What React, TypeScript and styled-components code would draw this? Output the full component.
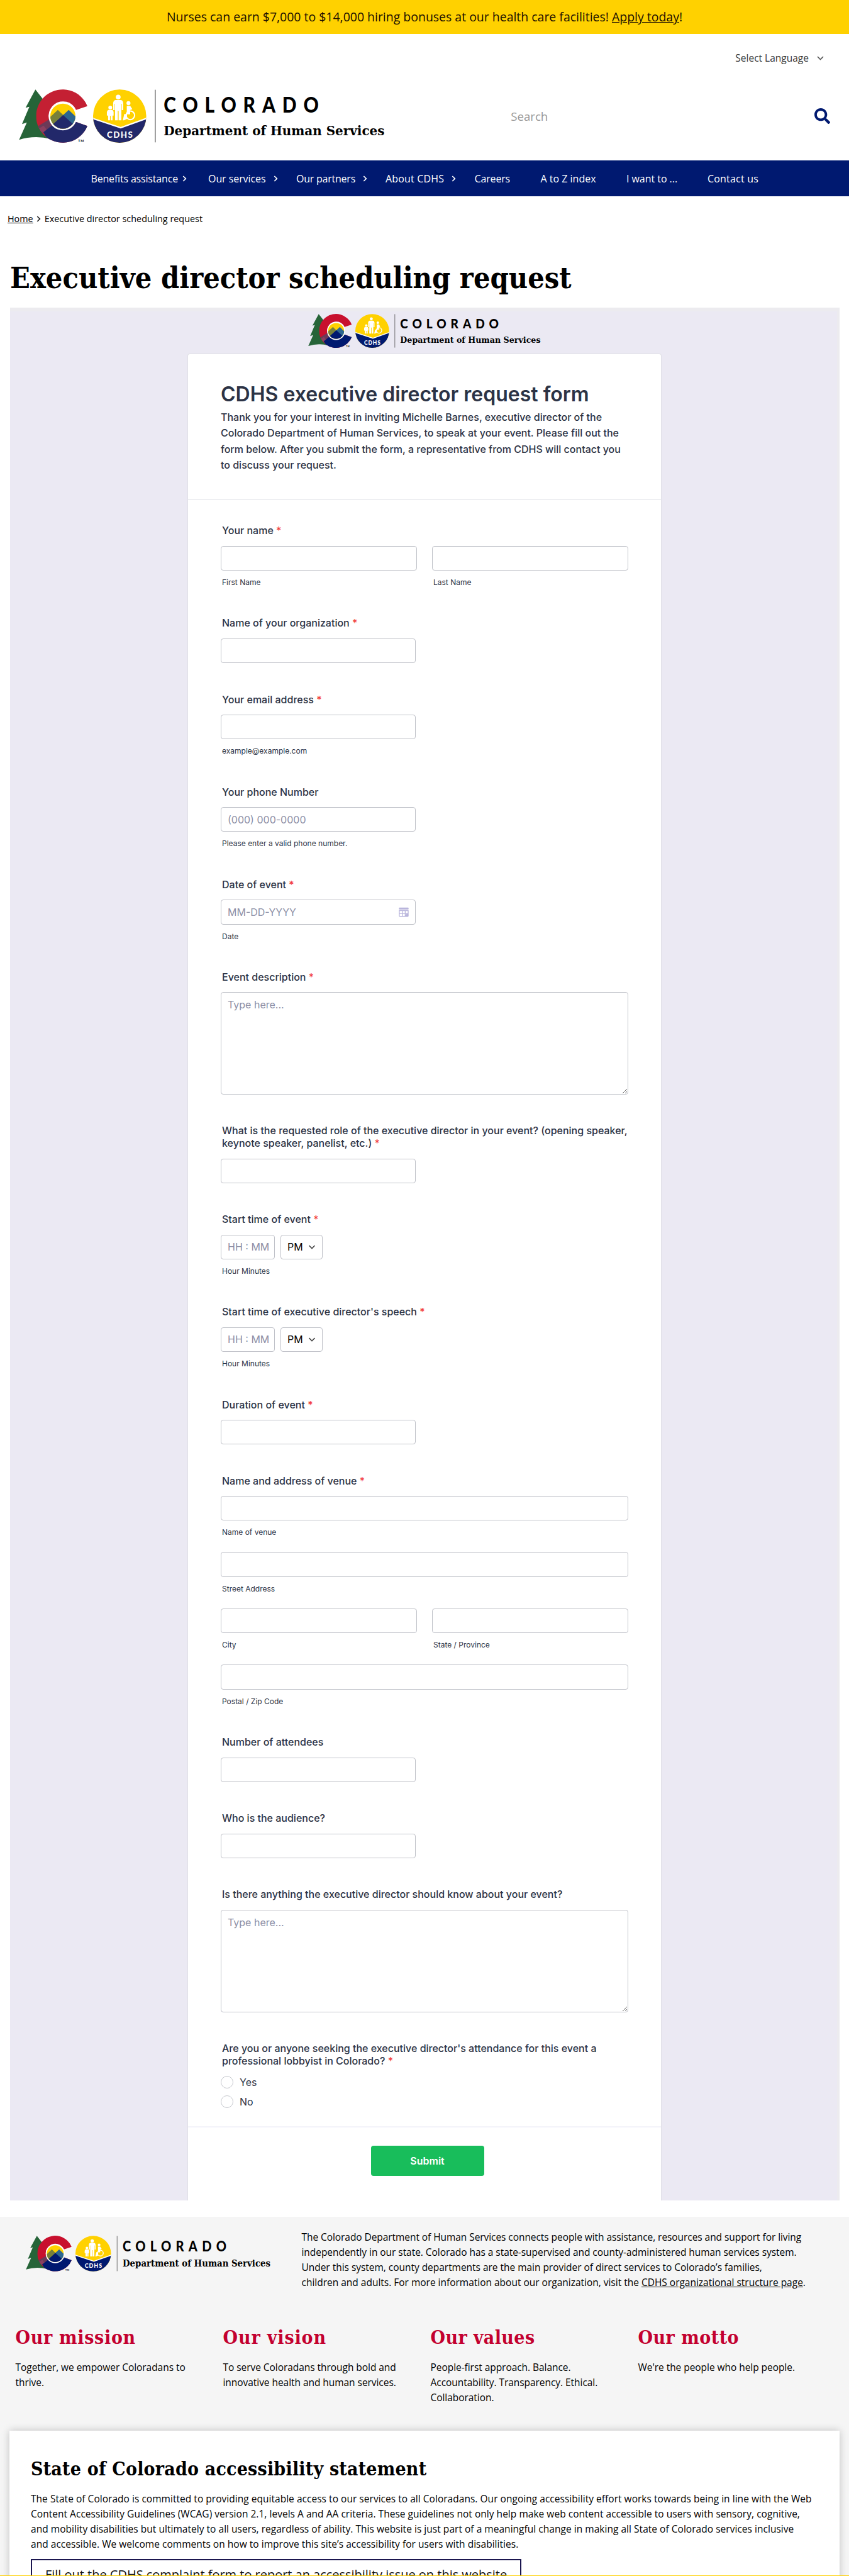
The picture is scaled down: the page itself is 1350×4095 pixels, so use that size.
import React, { ReactNode } from "react";
import styled, { createGlobalStyle } from "styled-components";
import { FaSearch } from "react-icons/fa";

const SANS = `"Trebuchet MS", "Open Sans", "Noto Sans", sans-serif`;
const SLAB = `"Museo Slab", "DejaVu Serif Condensed", "DejaVu Serif", serif`;
const FORM = `Inter, "Liberation Sans", sans-serif`;

const GlobalStyle = createGlobalStyle`
  *, *::before, *::after { box-sizing: border-box; }
  body { margin: 0; background: #fff; color: #000; font-family: ${SANS}; }
  h1, h2, p { margin: 0; }
  a { color: inherit; }
`;

const Page = styled.div`
  display: flex;
  flex-direction: column;
  width: 1350px;
  height: 4095px;
  overflow: hidden;
`;

const Content = styled.div`
  flex: 1;
  min-height: 0;
  overflow: hidden;
`;

const BottomBar = styled.div`
  flex: none;
  height: 1px;
  background: #ffd100;
`;

/* One typeset line; $ls tunes its tracking. */
const Line = styled.span<{ $ls?: number }>`
  display: block;
  white-space: nowrap;
  letter-spacing: ${(p) => p.$ls ?? 0}px;
`;

/* ---------- Header ---------- */

const Banner = styled.div`
  height: 54px;
  line-height: 53px;
  text-align: center;
  background: #ffd100;
  color: #1c0f00;
  font-size: 19.5px;
  letter-spacing: -0.02px;
`;

const LanguageRow = styled.div`
  display: flex;
  justify-content: flex-end;
  align-items: center;
  gap: 13px;
  height: 76px;
  padding-right: 40px;
  font-size: 15.5px;
  color: #333;
`;

const BrandRow = styled.div`
  display: flex;
  align-items: center;
  height: 125px;
  padding: 0 30px 16px;
`;

const SearchBox = styled.div`
  display: flex;
  align-items: center;
  justify-content: space-between;
  width: 508px;
  margin-left: 200px;
  font-size: 18.7px;
  color: #999;

  svg {
    color: #001970;
  }
`;

const Nav = styled.nav`
  display: flex;
  align-items: center;
  height: 57px;
  padding-left: 144.5px;
  background: #001970;
  color: #fff;
  font-size: 16px;
  line-height: 24px;
`;

const NavItem = styled.div<{ $w: number; $gap?: number; $ls: number }>`
  display: flex;
  align-items: center;
  flex: none;
  gap: ${(p) => p.$gap ?? 0}px;
  width: ${(p) => p.$w}px;
  white-space: nowrap;
  letter-spacing: ${(p) => p.$ls}px;
`;

const Breadcrumb = styled.div`
  display: flex;
  align-items: center;
  height: 24px;
  margin: 23.4px 0 0 12px;
  font-size: 14.4px;

  svg {
    margin: 2px 5.5px 0;
  }
`;

const PageTitle = styled.h1`
  margin: 53px 0 16.6px 16px;
  font: 700 46.5px/60px ${SLAB};
  white-space: nowrap;
`;

/* ---------- Request form ---------- */

const FormPanel = styled.div`
  display: flex;
  flex-direction: column;
  align-items: center;
  width: 1319px;
  margin-left: 15.5px;
  padding-top: 10.5px;
  background: #ebe9f3;
  box-shadow: inset -4px 6px 0 #ecebef;
  font-family: ${FORM};
  color: #2c3345;
`;

const Card = styled.div`
  width: 752px;
  margin-top: 8.6px;
  background: #fff;
  border-radius: 3px 3px 0 0;
  box-shadow: 0 0 0 1px #e0e0e6;
  clip-path: inset(-2px -2px 0 -2px);
`;

const CardHeader = styled.div`
  height: 231px;
  padding: 44.8px 52px 0;
  border-bottom: 1px solid #d9dbe3;
`;

const FormTitle = styled.h2`
  font-size: 32px;
  font-weight: 600;
  line-height: 39px;
  white-space: nowrap;
`;

const FormIntro = styled.p`
  margin-top: 4.4px;
  font-size: 16px;
  font-weight: 500;
  line-height: 25.6px;
`;

const FormBody = styled.div`
  height: 2586px;
  padding: 40.9px 52px 0;
`;

const FieldBlock = styled.div`
  margin-bottom: 48.3px;
`;

const Label = styled.div`
  margin: 0 0 13.5px 2px;
  font-size: 16px;
  font-weight: 500;
  line-height: 19.8px;
  white-space: nowrap;
`;

const Star = styled.span`
  color: #f23a3c;
`;

const Sub = styled.div`
  margin: 12px 0 0 2px;
  font-size: 12px;
  line-height: 14px;
`;

const Input = styled.input<{ $w?: number }>`
  display: block;
  width: ${(p) => p.$w ?? 310}px;
  height: 39.5px;
  padding: 0 10px;
  border: 1px solid #bfc1c8;
  border-radius: 4px;
  background: #fff;
  font: 400 16px/20px ${FORM};
  outline: none;

  &::placeholder {
    color: #8d8fa6;
    opacity: 1;
  }
`;

const TextArea = styled.textarea`
  display: block;
  width: 648px;
  height: 163px;
  padding: 10px;
  border: 1px solid #bfc1c8;
  border-radius: 4px;
  font: 400 16px/19.4px ${FORM};
  resize: vertical;
  outline: none;

  &::placeholder {
    color: #8d8fa6;
    opacity: 1;
  }
`;

const BoxedInput = styled.div<{ $w: number; $dark?: boolean }>`
  display: flex;
  align-items: center;
  justify-content: space-between;
  width: ${(p) => p.$w}px;
  height: 39.5px;
  padding: 0 10px;
  border: 1px solid #bfc1c8;
  border-radius: 4px;
  font-size: 16px;
  color: ${(p) => (p.$dark ? "#000" : "#8d8fa6")};
  white-space: nowrap;
`;

const Row = styled.div<{ $gap: number }>`
  display: flex;
  gap: ${(p) => p.$gap}px;
`;

const Stack = styled.div`
  display: flex;
  flex-direction: column;
  gap: 24px;
`;

const RadioRow = styled.label`
  display: flex;
  align-items: center;
  gap: 10px;
  height: 20px;
  margin-bottom: 11px;
  font-size: 16px;
`;

const RadioDot = styled.span`
  width: 20px;
  height: 20px;
  border: 1px solid #c6c8ce;
  border-radius: 50%;
`;

const SubmitRow = styled.div`
  display: flex;
  justify-content: center;
  height: 118.5px;
  padding-top: 29.5px;
  border-top: 2px solid #f3f3fa;
`;

const Submit = styled.button`
  width: 180px;
  height: 48px;
  margin-left: 9px;
  border: 0;
  border-radius: 4px;
  background: #18bd5b;
  color: #fff;
  font: 600 16px/20px ${FORM};
`;

/* ---------- Footer ---------- */

const Footer = styled.footer`
  height: 620px;
  margin-top: 25.5px;
  padding-top: 20px;
  background: #f5f5f5;
  font-size: 15.5px;
  line-height: 24px;
`;

const AboutRow = styled.div`
  display: flex;
  height: 154.5px;
  padding-left: 41px;
`;

const FooterLogo = styled.div`
  width: 438.5px;
  padding-top: 10.2px;
`;

const Pillars = styled.div`
  display: grid;
  grid-template-columns: 330px 330px 330px 1fr;
  height: 165.5px;
  padding-left: 24.5px;
`;

const PillarTitle = styled.h2<{ $ls: number }>`
  margin-bottom: 17px;
  font: 700 30px/36px ${SLAB};
  letter-spacing: ${(p) => p.$ls}px;
  color: #c3002f;
`;

const Statement = styled.section`
  width: 1320px;
  height: 400px;
  margin-left: 15px;
  padding: 43px 34px 0;
  background: #fff;
  box-shadow: 0 0 12px rgba(0, 0, 0, 0.22);
`;

const StatementTitle = styled.h2`
  margin-bottom: 17px;
  font: 700 30px/36px ${SLAB};
  letter-spacing: 0.2px;
`;

const ReportButton = styled.a`
  display: block;
  width: 780px;
  height: 52px;
  margin-top: 12px;
  padding: 9.6px 0 0 21px;
  border: 2px solid #1b1650;
  font-size: 20px;
  line-height: 28px;
  letter-spacing: -0.02px;
  white-space: nowrap;
  color: #111;
`;

/* ---------- Drawings ---------- */

const Chevron = ({ right, size = 11, color = "#555" }: { right?: boolean; size?: number; color?: string }) => (
  <svg width={right ? 7 : size} height={right ? 10 : 7} viewBox={right ? "0 0 7 10" : "0 0 11 7"} fill="none" stroke={color} strokeWidth="1.7">
    <path d={right ? "M1.3 1 L5.3 5 L1.3 9" : "M1 1 L5.5 5.6 L10 1"} />
  </svg>
);

const CalendarIcon = () => (
  <svg width="16" height="16" viewBox="0 0 16 16">
    <rect x="0.3" y="0.8" width="15.4" height="3" rx="1" fill="#b9b5dc" />
    <path d="M0.3 4.8H15.7V14a1.4 1.4 0 0 1-1.4 1.4H1.7A1.4 1.4 0 0 1 0.3 14Z" fill="#b9b5dc" />
    <g fill="#fff">
      <rect x="1.6" y="6.2" width="3.4" height="3.4" />
      <rect x="6.3" y="6.2" width="3.4" height="3.4" />
      <rect x="11" y="6.2" width="3.4" height="3.4" />
      <rect x="1.6" y="10.8" width="3.4" height="3.3" />
      <rect x="6.3" y="10.8" width="3.4" height="3.3" />
      <path d="M11 10.8H12.4L11 12.6Z" />
    </g>
  </svg>
);

const Logo = ({ width, id, red = "#c8102e", navy = "#001970" }: { width: number; id: string; red?: string; navy?: string }) => (
  <svg width={width} height={(width * 257) / 1747} viewBox="30 67 1747 257">
    <defs>
      <clipPath id={`${id}-c`}>
        <path d="M357 147A127 127 0 1 0 357 242L302 222A68 68 0 1 1 303 165Z" />
      </clipPath>
      <clipPath id={`${id}-d`}>
        <circle cx="240" cy="195" r="60" />
      </clipPath>
      <clipPath id={`${id}-o`}>
        <circle cx="511" cy="195" r="127" />
      </clipPath>
    </defs>
    <path d="M109 68L62 155L80 150L45 233L68 225L31 308Q105 285 182 304L165 140Z" fill="#266438" />
    <g clipPath={`url(#${id}-c)`}>
      <rect x="100" y="60" width="270" height="270" fill={red} />
      <path d="M118 245L175 210L195 240L145 275Z" fill="#6b3a58" />
      <path d="M112 262L148 240L165 262L148 275Z" fill="#8a4060" />
      <path d="M147 272L192 236L290 200L370 230V330H180Z" fill={navy} />
    </g>
    <circle cx="240" cy="195" r="68" fill="#fff" />
    <g clipPath={`url(#${id}-d)`}>
      <rect x="170" y="130" width="140" height="140" fill="#ffd100" />
      <path d="M165 212L216 165L252 200L200 250Z" fill="#77803a" />
      <path d="M230 200L268 165L312 208L290 240Z" fill="#2d668f" />
      <path d="M190 236L241 190L292 236L270 270H200Z" fill={navy} />
    </g>
    <text x="313" y="319" fontFamily="Lato, sans-serif" fontSize="16" fontWeight="700" textLength="27">TM</text>

    <g clipPath={`url(#${id}-o)`}>
      <rect x="380" y="60" width="262" height="262" fill="#ffd100" />
      <path d="M380 205L516 250L642 205V330H380Z" fill={navy} />
      <path d="M380 205L516 250L642 205" fill="none" stroke="#fff" strokeWidth="7" />
    </g>
    <g fill="#fff">
      <circle cx="504" cy="104" r="11.5" />
      <path d="M491 118H517Q527 120 528 132V166H521V136H519V215H506V170H502V215H489V136H487V166H480V132Q481 120 491 118Z" />
      <circle cx="466" cy="154" r="9" />
      <path d="M457 165H476Q482 168 482 176V192H477V215H468V194H465V215H456V192H450V176Q451 167 457 165Z" />
      <circle cx="553" cy="133" r="9.5" />
      <path d="M545 146H561L571 161L564 166L561 164V186H546V208L532 215H526L533 185H545Z" />
    </g>
    <circle cx="562" cy="191" r="20.5" fill="none" stroke="#fff" strokeWidth="6" />
    <text x="450" y="297" fill="#fff" fontFamily="Lato, sans-serif" fontSize="40" fontWeight="900" textLength="123">CDHS</text>

    <rect x="679.5" y="69" width="3" height="251" fill="#333" />
    <text transform="translate(721 177) scale(0.9 1)" fontFamily="Lato, sans-serif" fontSize="100" fontWeight="900" textLength="822">COLORADO</text>
    <text x="721" y="285" fontFamily="DejaVu Serif Condensed, DejaVu Serif, serif" fontSize="64" fontWeight="700" textLength="1054" lengthAdjust="spacingAndGlyphs">
      Department of Human Services
    </text>
  </svg>
);

/* ---------- Form parts ---------- */

const Field = ({ label, required, sub, children }: { label: ReactNode; required?: boolean; sub?: string; children: ReactNode }) => (
  <FieldBlock>
    <Label>
      {label}
      {required && <Star> *</Star>}
    </Label>
    {children}
    {sub && <Sub>{sub}</Sub>}
  </FieldBlock>
);

const SubInput = ({ w, sub }: { w: number; sub: string }) => (
  <div>
    <Input $w={w} />
    <Sub>{sub}</Sub>
  </div>
);

const TimeInput = () => (
  <Row $gap={9}>
    <BoxedInput $w={86}>HH : MM</BoxedInput>
    <BoxedInput $w={67} $dark>
      PM
      <Chevron size={12} color="#444" />
    </BoxedInput>
  </Row>
);

const NAV = [
  { text: "Benefits assistance", w: 186.5, gap: 7, ls: -0.18 },
  { text: "Our services", w: 140, gap: 12.5, ls: -0.07 },
  { text: "Our partners", w: 142, gap: 12, ls: -0.23 },
  { text: "About CDHS", w: 141.5, gap: 12, ls: 0.16 },
  { text: "Careers", w: 105, ls: -0.15 },
  { text: "A to Z index", w: 136.5, ls: 0 },
  { text: "I want to ...", w: 129, ls: -0.05 },
  { text: "Contact us", w: 90, ls: 0.2 },
];

const PILLARS = [
  { title: "Our mission", ls: 0.69, lines: ["Together, we empower Coloradans to", "thrive."] },
  { title: "Our vision", ls: 0.87, lines: ["To serve Coloradans through bold and", "innovative health and human services."] },
  { title: "Our values", ls: 0.38, lines: ["People-first approach. Balance.", "Accountability. Transparency. Ethical.", "Collaboration."] },
  { title: "Our motto", ls: 0.48, lines: ["We're the people who help people."] },
];

export default function App() {
  return (
    <Page>
      <GlobalStyle />
      <Content>
        <Banner>
          Nurses can earn $7,000 to $14,000 hiring bonuses at our health care facilities! <a href="#apply">Apply today</a>!
        </Banner>
        <LanguageRow>
          Select Language
          <Chevron />
        </LanguageRow>
        <BrandRow>
          <Logo width={582.3} id="top" red="#c42033" navy="#22286a" />
          <SearchBox>
            Search
            <FaSearch size={25} />
          </SearchBox>
        </BrandRow>
        <Nav>
          {NAV.map((n) => (
            <NavItem key={n.text} $w={n.w} $gap={n.gap} $ls={n.ls}>
              {n.text}
              {n.gap && <Chevron right color="#fff" />}
            </NavItem>
          ))}
        </Nav>
        <Breadcrumb>
          <a href="#home">Home</a>
          <Chevron right color="#222" />
          Executive director scheduling request
        </Breadcrumb>
        <PageTitle>Executive director scheduling request</PageTitle>

        <FormPanel>
          <Logo width={370} id="form" />
          <Card>
            <CardHeader>
              <FormTitle>CDHS executive director request form</FormTitle>
              <FormIntro>
                <Line>Thank you for your interest in inviting Michelle Barnes, executive director of the</Line>
                <Line>Colorado Department of Human Services, to speak at your event. Please fill out the</Line>
                <Line>form below. After you submit the form, a representative from CDHS will contact you</Line>
                <Line>to discuss your request.</Line>
              </FormIntro>
            </CardHeader>
            <FormBody>
              <Field label="Your name" required>
                <Row $gap={24}>
                  <SubInput w={312} sub="First Name" />
                  <SubInput w={312} sub="Last Name" />
                </Row>
              </Field>
              <Field label="Name of your organization" required>
                <Input />
              </Field>
              <Field label="Your email address" required sub="example@example.com">
                <Input />
              </Field>
              <Field label="Your phone Number" sub="Please enter a valid phone number.">
                <Input placeholder="(000) 000-0000" />
              </Field>
              <Field label="Date of event" required sub="Date">
                <BoxedInput $w={310}>
                  MM-DD-YYYY
                  <CalendarIcon />
                </BoxedInput>
              </Field>
              <Field label="Event description" required>
                <TextArea placeholder="Type here..." />
              </Field>
              <Field
                required
                label={
                  <>
                    What is the requested role of the executive director in your event? (opening speaker,
                    <br />
                    keynote speaker, panelist, etc.)
                  </>
                }
              >
                <Input />
              </Field>
              <Field label="Start time of event" required sub="Hour Minutes">
                <TimeInput />
              </Field>
              <Field label="Start time of executive director's speech" required sub="Hour Minutes">
                <TimeInput />
              </Field>
              <Field label="Duration of event" required>
                <Input />
              </Field>
              <Field label="Name and address of venue" required>
                <Stack>
                  <SubInput w={648} sub="Name of venue" />
                  <SubInput w={648} sub="Street Address" />
                  <Row $gap={24}>
                    <SubInput w={312} sub="City" />
                    <SubInput w={312} sub="State / Province" />
                  </Row>
                  <SubInput w={648} sub="Postal / Zip Code" />
                </Stack>
              </Field>
              <Field label="Number of attendees">
                <Input />
              </Field>
              <Field label="Who is the audience?">
                <Input />
              </Field>
              <Field label="Is there anything the executive director should know about your event?">
                <TextArea placeholder="Type here..." />
              </Field>
              <Field
                required
                label={
                  <>
                    Are you or anyone seeking the executive director's attendance for this event a
                    <br />
                    professional lobbyist in Colorado?
                  </>
                }
              >
                <RadioRow>
                  <RadioDot />
                  Yes
                </RadioRow>
                <RadioRow>
                  <RadioDot />
                  No
                </RadioRow>
              </Field>
            </FormBody>
            <SubmitRow>
              <Submit>Submit</Submit>
            </SubmitRow>
          </Card>
        </FormPanel>

        <Footer>
          <AboutRow>
            <FooterLogo>
              <Logo width={389.5} id="foot" />
            </FooterLogo>
            <p>
              <Line $ls={-0.066}>The Colorado Department of Human Services connects people with assistance, resources and support for living</Line>
              <Line $ls={-0.05}>independently in our state. Colorado has a state-supervised and county-administered human services system.</Line>
              <Line $ls={-0.03}>Under this system, county departments are the main provider of direct services to Colorado’s families,</Line>
              <Line $ls={-0.01}>
                children and adults. For more information about our organization, visit the <a href="#structure">CDHS organizational structure page</a>.
              </Line>
            </p>
          </AboutRow>
          <Pillars>
            {PILLARS.map((p) => (
              <div key={p.title}>
                <PillarTitle $ls={p.ls}>{p.title}</PillarTitle>
                {p.lines.map((l) => (
                  <Line key={l} $ls={-0.05}>
                    {l}
                  </Line>
                ))}
              </div>
            ))}
          </Pillars>
          <Statement>
            <StatementTitle>State of Colorado accessibility statement</StatementTitle>
            <p>
              <Line $ls={0.03}>
                The State of Colorado is committed to providing equitable access to our services to all Coloradans. Our ongoing accessibility effort works towards being in line with the Web
              </Line>
              <Line $ls={0.03}>
                Content Accessibility Guidelines (WCAG) version 2.1, levels A and AA criteria. These guidelines not only help make web content accessible to users with sensory, cognitive,
              </Line>
              <Line $ls={0.03}>
                and mobility disabilities but ultimately to all users, regardless of ability. This website is just part of a meaningful change in making all State of Colorado services inclusive
              </Line>
              <Line $ls={0.03}>and accessible. We welcome comments on how to improve this site’s accessibility for users with disabilities.</Line>
            </p>
            <ReportButton>Fill out the CDHS complaint form to report an accessibility issue on this website</ReportButton>
          </Statement>
        </Footer>
      </Content>
      <BottomBar />
    </Page>
  );
}
